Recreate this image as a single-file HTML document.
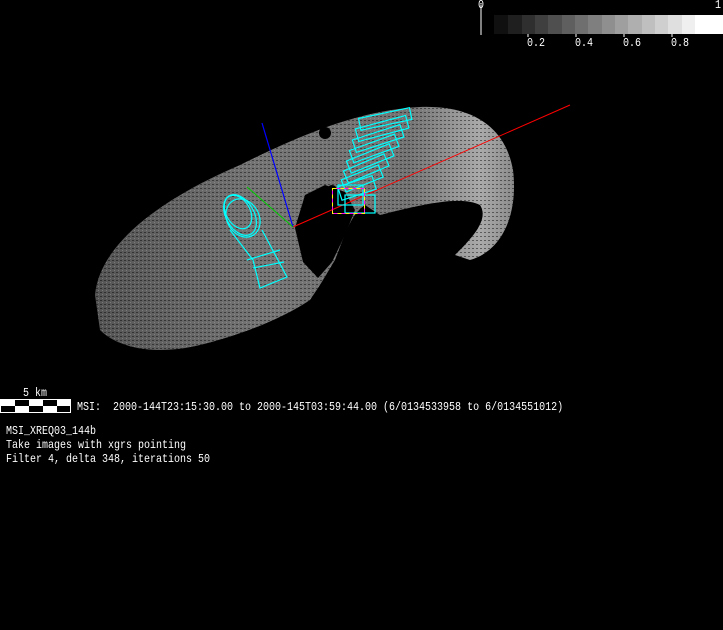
<!DOCTYPE html>
<html><head><meta charset="utf-8"><style>
html,body{margin:0;padding:0;background:#000;}
body{width:723px;height:630px;position:relative;overflow:hidden;font-family:"Liberation Mono","DejaVu Sans Mono",monospace;color:#fff;}
.t{position:absolute;font-size:10px;white-space:pre;line-height:11px;transform:scaleY(1.15);transform-origin:0 0;}
</style></head><body>
<svg width="723" height="630" style="position:absolute;left:0;top:0">
<defs>
<linearGradient id="g" x1="0" y1="0" x2="1" y2="0">
<stop offset="0" stop-color="#555"/><stop offset="0.4" stop-color="#757575"/><stop offset="0.75" stop-color="#737373"/><stop offset="0.92" stop-color="#aaa"/><stop offset="1" stop-color="#8a8a8a"/>
</linearGradient>
<pattern id="d" width="4" height="4" patternUnits="userSpaceOnUse"><rect x="0" y="0" width="2" height="1" fill="#000" opacity="0.45"/><rect x="2" y="2" width="1" height="1" fill="#aaa" opacity="0.4"/></pattern>
</defs>
<path d="M95,295 C100,240 170,195 240,165 C300,135 360,110 420,107 C470,105 505,125 513,170 C518,210 505,250 470,260 L455,255 C470,240 490,220 480,205 C460,195 420,205 380,215 L365,205 C350,215 345,235 335,260 L320,285 L310,300 C280,320 240,335 200,345 C160,355 120,350 100,330 Z" fill="url(#g)"/>
<path d="M95,295 C100,240 170,195 240,165 C300,135 360,110 420,107 C470,105 505,125 513,170 C518,210 505,250 470,260 L455,255 C470,240 490,220 480,205 C460,195 420,205 380,215 L365,205 C350,215 345,235 335,260 L320,285 L310,300 C280,320 240,335 200,345 C160,355 120,350 100,330 Z" fill="url(#d)"/>
<path d="M295,228 L305,195 L325,185 L345,192 L355,210 L345,235 L332,262 L318,278 L303,262 Z" fill="#000"/>
<circle cx="332" cy="190" r="5" fill="#000"/><circle cx="275" cy="143" r="5" fill="#000"/><circle cx="325" cy="133" r="6" fill="#000"/>
<line x1="293" y1="227" x2="570" y2="105" stroke="#f00" stroke-width="1"/>
<line x1="262" y1="123" x2="293" y2="227" stroke="#00f" stroke-width="1.2"/>
<line x1="247" y1="187" x2="293" y2="227" stroke="#0c0" stroke-width="1"/>
<g fill="none" stroke="#0ff" stroke-width="1.2">
<ellipse cx="240" cy="215" rx="14" ry="22" transform="rotate(-30 240 215)"/>
<ellipse cx="243" cy="218" rx="16" ry="20" transform="rotate(-30 243 218)"/>
<ellipse cx="238" cy="212" rx="12" ry="18" transform="rotate(-30 238 212)"/>
<path d="M230,230 L253,260 L260,288 L287,277 L270,245 L262,230"/>
<path d="M247,260 L280,250 M253,268 L284,262"/>
<g transform="translate(385,118) rotate(-12)"><rect x="-26" y="-5" width="52" height="12"/></g>
<g transform="translate(382,128) rotate(-15)"><rect x="-26" y="-6" width="52" height="13"/></g>
<g transform="translate(378,138) rotate(-18)"><rect x="-25" y="-6" width="50" height="13"/></g>
<g transform="translate(374,148) rotate(-20)"><rect x="-24" y="-6" width="48" height="13"/></g>
<g transform="translate(370,158) rotate(-22)"><rect x="-23" y="-6" width="46" height="13"/></g>
<g transform="translate(366,168) rotate(-23)"><rect x="-22" y="-6" width="44" height="13"/></g>
<g transform="translate(362,178) rotate(-22)"><rect x="-20" y="-6" width="40" height="13"/></g>
<g transform="translate(357,188) rotate(-18)"><rect x="-18" y="-7" width="36" height="14"/></g>
<rect x="338" y="185" width="25" height="20"/>
<rect x="345" y="195" width="30" height="18"/>
</g>
<rect x="332.5" y="188.5" width="32" height="25" fill="none" stroke="#f0f" stroke-width="1"/>
<rect x="332.5" y="188.5" width="32" height="25" fill="none" stroke="#ff0" stroke-width="1" stroke-dasharray="4 4"/>
<line x1="481" y1="5" x2="481" y2="35" stroke="#fff"/>
<line x1="528" y1="34" x2="528" y2="37" stroke="#fff"/>
<line x1="576" y1="34" x2="576" y2="37" stroke="#fff"/>
<line x1="624" y1="34" x2="624" y2="37" stroke="#fff"/>
<line x1="672" y1="34" x2="672" y2="37" stroke="#fff"/>
<g>
<rect x="494" y="15" width="14" height="19" fill="#101010"/>
<rect x="508" y="15" width="14" height="19" fill="#1f1f1f"/>
<rect x="522" y="15" width="14" height="19" fill="#2f2f2f"/>
<rect x="535" y="15" width="14" height="19" fill="#3f3f3f"/>
<rect x="548" y="15" width="14" height="19" fill="#4f4f4f"/>
<rect x="562" y="15" width="14" height="19" fill="#5f5f5f"/>
<rect x="575" y="15" width="14" height="19" fill="#6f6f6f"/>
<rect x="588" y="15" width="14" height="19" fill="#7f7f7f"/>
<rect x="602" y="15" width="14" height="19" fill="#8f8f8f"/>
<rect x="615" y="15" width="14" height="19" fill="#9f9f9f"/>
<rect x="628" y="15" width="14" height="19" fill="#afafaf"/>
<rect x="642" y="15" width="14" height="19" fill="#bfbfbf"/>
<rect x="655" y="15" width="14" height="19" fill="#cfcfcf"/>
<rect x="668" y="15" width="14" height="19" fill="#dfdfdf"/>
<rect x="682" y="15" width="14" height="19" fill="#efefef"/>
<rect x="695" y="15" width="28" height="19" fill="#fff"/>
</g>
<rect x="0.5" y="399.5" width="70" height="13" fill="#000" stroke="#fff"/>
<rect x="1" y="400" width="14" height="6" fill="#fff"/><rect x="15" y="406" width="14" height="6" fill="#fff"/>
<rect x="29" y="400" width="14" height="6" fill="#fff"/><rect x="43" y="406" width="14" height="6" fill="#fff"/>
<rect x="57" y="400" width="14" height="6" fill="#fff"/>
</svg>
<div class="t" style="left:478px;top:0px">0</div>
<div class="t" style="left:715px;top:0px">1</div>
<div class="t" style="left:527px;top:38px">0.2</div>
<div class="t" style="left:575px;top:38px">0.4</div>
<div class="t" style="left:623px;top:38px">0.6</div>
<div class="t" style="left:671px;top:38px">0.8</div>
<div class="t" style="left:23px;top:388px">5 km</div>
<div class="t" style="left:77px;top:402px">MSI:  2000-144T23:15:30.00 to 2000-145T03:59:44.00 (6/0134533958 to 6/0134551012)</div>
<div class="t" style="left:6px;top:426px">MSI_XREQ03_144b</div>
<div class="t" style="left:6px;top:440px">Take images with xgrs pointing</div>
<div class="t" style="left:6px;top:454px">Filter 4, delta 348, iterations 50</div>
</body></html>
